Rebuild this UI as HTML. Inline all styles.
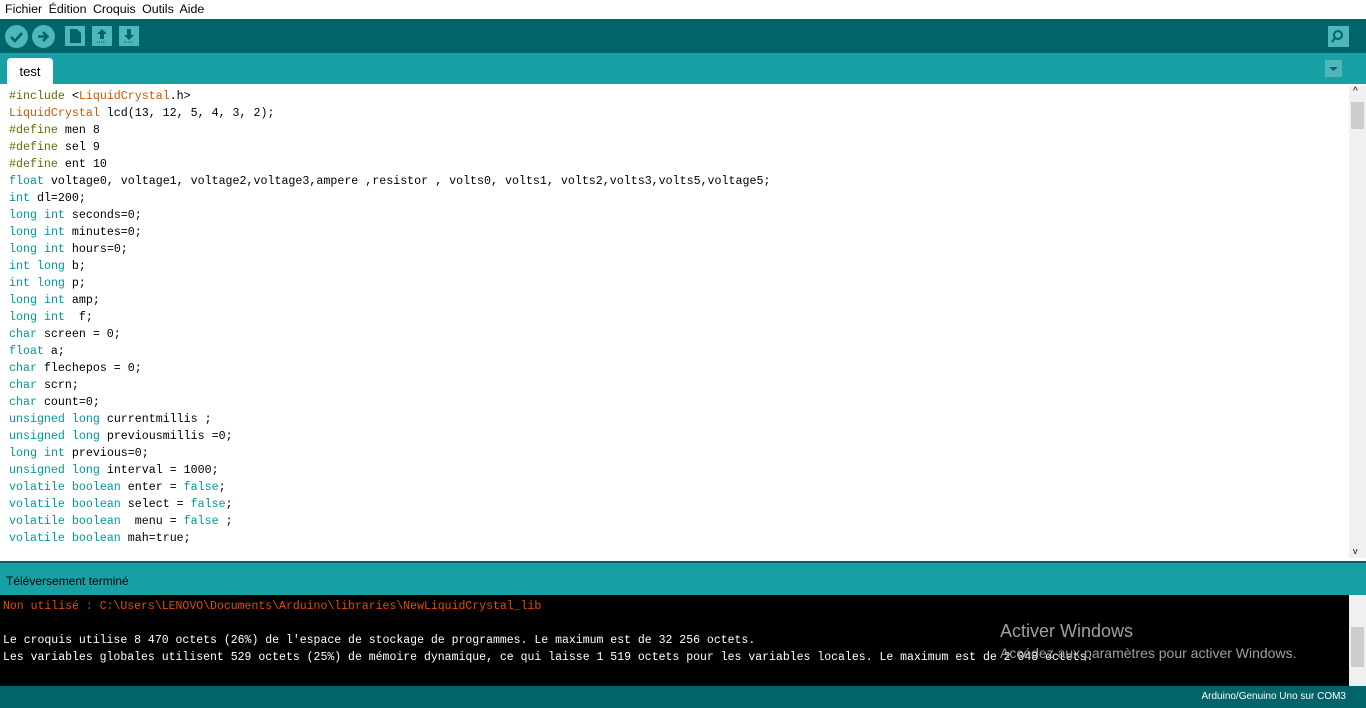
<!DOCTYPE html>
<html><head><style>
body{margin:0;width:1366px;height:708px;overflow:hidden;font-family:"Liberation Sans",sans-serif;background:#fff;position:relative}
.menu{height:18px;font-size:12.4px;line-height:18px;padding-left:5px;word-spacing:3px;background:#fff}
.tb{position:absolute;top:19px;left:0;width:1366px;height:34px;background:#006468}
.circ{position:absolute;top:6px;width:23px;height:23px;border-radius:50%;background:#4db7bb}
.sq{position:absolute;top:7px;width:20px;height:20px;background:#4db7bb}
.tabs{position:absolute;top:53px;left:0;width:1366px;height:31px;background:#17a1a5;border-bottom:2px solid #fff}
.tab{position:absolute;left:7px;top:5px;width:46px;height:27px;background:#fff;border-radius:4px 4px 0 0;font-size:13px;text-align:center;line-height:27px}
.ed{position:absolute;top:86px;left:0;width:1349px;height:472px;background:#fff}
pre{margin:0;font-family:"Liberation Mono",monospace;font-size:11.65px;line-height:17px;position:absolute;left:9px;top:88px;color:#000}
.k{color:#00979c}.o{color:#d35400}.d{color:#5e6d03}
.sb{position:absolute;left:1349px;top:86px;width:17px;height:472px;background:#f0f0f0}
.st{position:absolute;top:561px;left:0;width:1366px;height:34px;background:#17a1a5;font-size:12px;line-height:36px;padding-left:6px;box-sizing:border-box;color:#000;border-top:2px solid #006468}
.con{position:absolute;top:595px;left:0;width:1349px;height:91px;background:#000}
.con pre{left:3px;top:3px;color:#fff;font-size:11.5px}
.bot{position:absolute;top:686px;left:0;width:1366px;height:22px;background:#006468;color:#fff;font-size:10px;text-align:right;padding-right:20px;box-sizing:border-box;line-height:22px}
</style></head><body>
<div class="menu">Fichier Édition Croquis Outils Aide</div>
<div class="tb">
<div class="circ" style="left:5px"><svg width="23" height="23"><path d="M6 12l4 4 7-8" stroke="#006468" stroke-width="2.5" fill="none"/></svg></div>
<div class="circ" style="left:32px"><svg width="23" height="23"><path d="M6 11.5h9M11 7l4.5 4.5L11 16" stroke="#006468" stroke-width="2.5" fill="none"/></svg></div>
<div class="sq" style="left:65px"><svg width="20" height="20"><path d="M5 3h7l4 4v10H5z" fill="#006468"/></svg></div>
<div class="sq" style="left:92px"><svg width="20" height="20"><path d="M10 3l-5 5h3v5h4V8h3z" fill="#006468"/><path d="M5 16h10" stroke="#006468" stroke-dasharray="1 1"/></svg></div>
<div class="sq" style="left:119px"><svg width="20" height="20"><path d="M10 14l-5-5h3V3h4v6h3z" fill="#006468"/><path d="M5 16h10" stroke="#006468" stroke-dasharray="1 1"/></svg></div>
<div class="sq" style="left:1328px;width:21px;height:21px"><svg width="21" height="21"><circle cx="10" cy="9" r="4" stroke="#006468" stroke-width="2" fill="none"/><path d="M7 12l-3 4" stroke="#006468" stroke-width="2"/></svg></div>
</div>
<div class="tabs"><div class="tab">test</div><div style="position:absolute;left:1325px;top:7px;width:17px;height:17px;background:#4db7bb"><svg width="17" height="17"><path d="M4 7h9l-4.5 4z" fill="#006468"/></svg></div></div>
<div class="ed"></div>
<pre><span class="d">#include</span> &lt;<span class="o">LiquidCrystal</span>.h&gt;
<span class="o">LiquidCrystal</span> lcd(13, 12, 5, 4, 3, 2);
<span class="d">#define</span> men 8
<span class="d">#define</span> sel 9
<span class="d">#define</span> ent 10
<span class="k">float</span> voltage0, voltage1, voltage2,voltage3,ampere ,resistor , volts0, volts1, volts2,volts3,volts5,voltage5;
<span class="k">int</span> dl=200;
<span class="k">long</span> <span class="k">int</span> seconds=0;
<span class="k">long</span> <span class="k">int</span> minutes=0;
<span class="k">long</span> <span class="k">int</span> hours=0;
<span class="k">int</span> <span class="k">long</span> b;
<span class="k">int</span> <span class="k">long</span> p;
<span class="k">long</span> <span class="k">int</span> amp;
<span class="k">long</span> <span class="k">int</span>  f;
<span class="k">char</span> screen = 0;
<span class="k">float</span> a;
<span class="k">char</span> flechepos = 0;
<span class="k">char</span> scrn;
<span class="k">char</span> count=0;
<span class="k">unsigned</span> <span class="k">long</span> currentmillis ;
<span class="k">unsigned</span> <span class="k">long</span> previousmillis =0;
<span class="k">long</span> <span class="k">int</span> previous=0;
<span class="k">unsigned</span> <span class="k">long</span> interval = 1000;
<span class="k">volatile</span> <span class="k">boolean</span> enter = <span class="k">false</span>;
<span class="k">volatile</span> <span class="k">boolean</span> select = <span class="k">false</span>;
<span class="k">volatile</span> <span class="k">boolean</span>  menu = <span class="k">false</span> ;
<span class="k">volatile</span> <span class="k">boolean</span> mah=true;</pre>
<div class="sb"><div style="position:absolute;top:16px;left:2px;width:13px;height:27px;background:#cdcdcd"></div><div style="position:absolute;top:0;left:4px;font-size:10px">^</div><div style="position:absolute;bottom:2px;left:4px;font-size:9px">v</div></div>
<div class="st">Téléversement terminé</div>
<div class="con"><pre><span style="color:#e34c00">Non utilisé : C:\Users\LENOVO\Documents\Arduino\libraries\NewLiquidCrystal_lib</span>

Le croquis utilise 8 470 octets (26%) de l'espace de stockage de programmes. Le maximum est de 32 256 octets.
Les variables globales utilisent 529 octets (25%) de mémoire dynamique, ce qui laisse 1 519 octets pour les variables locales. Le maximum est de 2 048 octets.</pre>
<div style="position:absolute;left:1000px;top:26px;color:#a0a0a0;font-size:18px">Activer Windows</div>
<div style="position:absolute;left:1000px;top:50px;color:#a0a0a0;font-size:14px">Accédez aux paramètres pour activer Windows.</div>
</div>
<div style="position:absolute;left:1349px;top:595px;width:17px;height:91px;background:#f0f0f0"><div style="position:absolute;top:32px;left:2px;width:13px;height:40px;background:#cdcdcd"></div></div>
<div class="bot">Arduino/Genuino Uno sur COM3</div>
</body></html>
